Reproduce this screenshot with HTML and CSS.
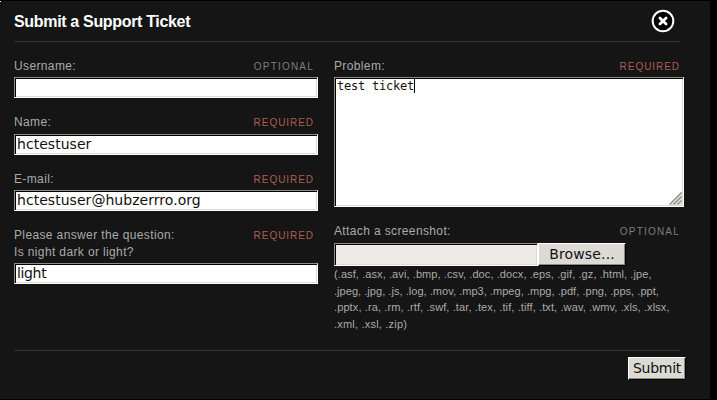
FILE: index.html
```html
<!DOCTYPE html>
<html lang="en">
<head>
<meta charset="utf-8">
<title>Submit a Support Ticket</title>
<link rel="stylesheet" href="styles.css">
</head>
<body>
<form class="panel">
  <header class="head">
    <h1><span>Submit a Support Ticket</span></h1>
    <svg class="close" width="28" height="28" viewBox="0 0 28 28" role="img" aria-label="Close">
      <circle cx="14" cy="14" r="10.3" fill="#000" stroke="#fff" stroke-width="2"/>
      <path d="M10.9 10.9l6.2 6.2M17.1 10.9l-6.2 6.2" stroke="#fff" stroke-width="2.8" stroke-linecap="round"/>
    </svg>
  </header>
  <div class="columns">
    <div class="left">
      <div class="field">
        <div class="label"><span>Username:</span><em class="opt">OPTIONAL</em></div>
        <div class="box"></div>
      </div>
      <div class="field name">
        <div class="label"><span>Name:</span><em class="req">REQUIRED</em></div>
        <div class="box"><span>hctestuser</span></div>
      </div>
      <div class="field mail">
        <div class="label"><span>E-mail:</span><em class="req">REQUIRED</em></div>
        <div class="box"><span>hctestuser@hubzerrro.org</span></div>
      </div>
      <div class="field ask">
        <div class="label"><span>Please answer the question:<br>Is night dark or light?</span><em class="req">REQUIRED</em></div>
        <div class="box"><span class="tight">light</span></div>
      </div>
    </div>
    <div class="right">
      <div class="label"><span>Problem:</span><em class="req">REQUIRED</em></div>
      <div class="box area"><span class="mono">test ticket</span><i class="caret"></i>
        <svg class="grip" width="13" height="13" viewBox="0 0 13 13"><path d="M0 13L13 0V13Z" fill="#e4e2dc"/><path d="M.5 12.5l12-12M4.5 12.5l8-8M8.5 12.5l4-4" stroke="#8a887e" stroke-width="1.2"/></svg>
      </div>
      <div class="label attach"><span>Attach a screenshot:</span><em class="opt">OPTIONAL</em></div>
      <div class="file"><div class="box path"></div><div class="button browse"><span>Browse...</span></div></div>
      <p class="types"><span class="t1">(.asf, .asx, .avi, .bmp, .csv, .doc, .docx, .eps, .gif, .gz, .html, .jpe,</span><br><span class="t2">.jpeg, .jpg, .js, .log, .mov, .mp3, .mpeg, .mpg, .pdf, .png, .pps, .ppt,</span><br><span class="t3">.pptx, .ra, .rm, .rtf, .swf, .tar, .tex, .tif, .tiff, .txt, .wav, .wmv, .xls, .xlsx,</span><br><span class="t4">.xml, .xsl, .zip)</span></p>
    </div>
  </div>
  <footer class="foot"><div class="button submit"><span>Submit</span></div></footer>
</form>
</body>
</html>
```
FILE: styles.css
```css
* { box-sizing: border-box; }
body { margin: 0; background: #000; width: 717px; height: 400px; overflow: hidden; font-family: "Liberation Sans", Arial, sans-serif; }
.panel { margin: 1px 7px 1px 0; height: 398px; background: #151515 linear-gradient(#fff, #fff) 0 0 / 1px 1px no-repeat; padding: 0 24px 0 14px; }
.head { height: 41px; width: 666px; border-bottom: 1px solid #333; display: flex; justify-content: space-between; }
h1 { margin: 0; font-size: 16px; line-height: 41px; color: #fff; white-space: nowrap; letter-spacing: -0.33px; }
.close { margin: 6px 3px 0 0; }
.columns { display: flex; gap: 16px; height: 308px; padding-top: 15px; }
.left { width: 304px; }
.right { width: 350px; flex: none; }
.label { display: flex; justify-content: space-between; min-height: 20px; padding-top: 1px; font-size: 12px; line-height: 17px; letter-spacing: 0.37px; color: #aaa; white-space: nowrap; padding-right: 4px; }
.field { margin-bottom: 15px; }
.field + .field .label { min-height: 21px; }
.field.mail .label { min-height: 20px; }
.field.ask .label { padding-bottom: 2px; }
.label em { font-style: normal; font-size: 10px; }
.opt { color: #7d7d7d; letter-spacing: 1.2px; }
.req { color: #ae5d50; letter-spacing: 0.95px; }
.box { height: 21px; background: #fff; border: 1px solid; border-color: #8f8d80 #fff #fff #8f8d80; box-shadow: inset 1px 1px #000, inset -1px -1px #dcdad5; padding-left: 2px; font: 14px/19px "DejaVu Sans", sans-serif; letter-spacing: 0.04px; color: #111; white-space: nowrap; }
.tight { letter-spacing: -0.35px; }
.area { position: relative; height: 130px; font: 12px/17px "DejaVu Sans Mono", monospace; display: flex; align-items: flex-start; }
.mono { letter-spacing: -0.22px; }
.caret { width: 1px; height: 14px; margin-top: 1px; background: #000; }
.grip { position: absolute; right: 1px; bottom: 1px; }
.attach { margin-top: 15px; min-height: 21px; }
.file { display: flex; }
.path { width: 204px; height: 23px; background: #eeebe7; }
.button { background: #dcdad5; border: 1px solid; border-color: #fff #000 #000 #fff; box-shadow: inset -1px -1px #8f8d80; color: #111; font: 14px/21px "DejaVu Sans", sans-serif; text-align: center; white-space: nowrap; }
.browse { width: 88px; height: 23px; letter-spacing: 0.15px; }
.submit { width: 58px; height: 23px; letter-spacing: -0.25px; }
.types { margin: 0; font-size: 11px; line-height: 16.6px; color: #aaa; white-space: nowrap; }
.t1 { letter-spacing: 0.09px; }
.t2 { letter-spacing: 0.04px; }
.t3 { letter-spacing: 0.11px; }
.t4 { letter-spacing: 0.2px; }
.foot { width: 672px; height: 30px; background: linear-gradient(#333, #333) 0 0 / 666px 1px no-repeat; display: flex; justify-content: flex-end; padding-top: 7px; }
```
